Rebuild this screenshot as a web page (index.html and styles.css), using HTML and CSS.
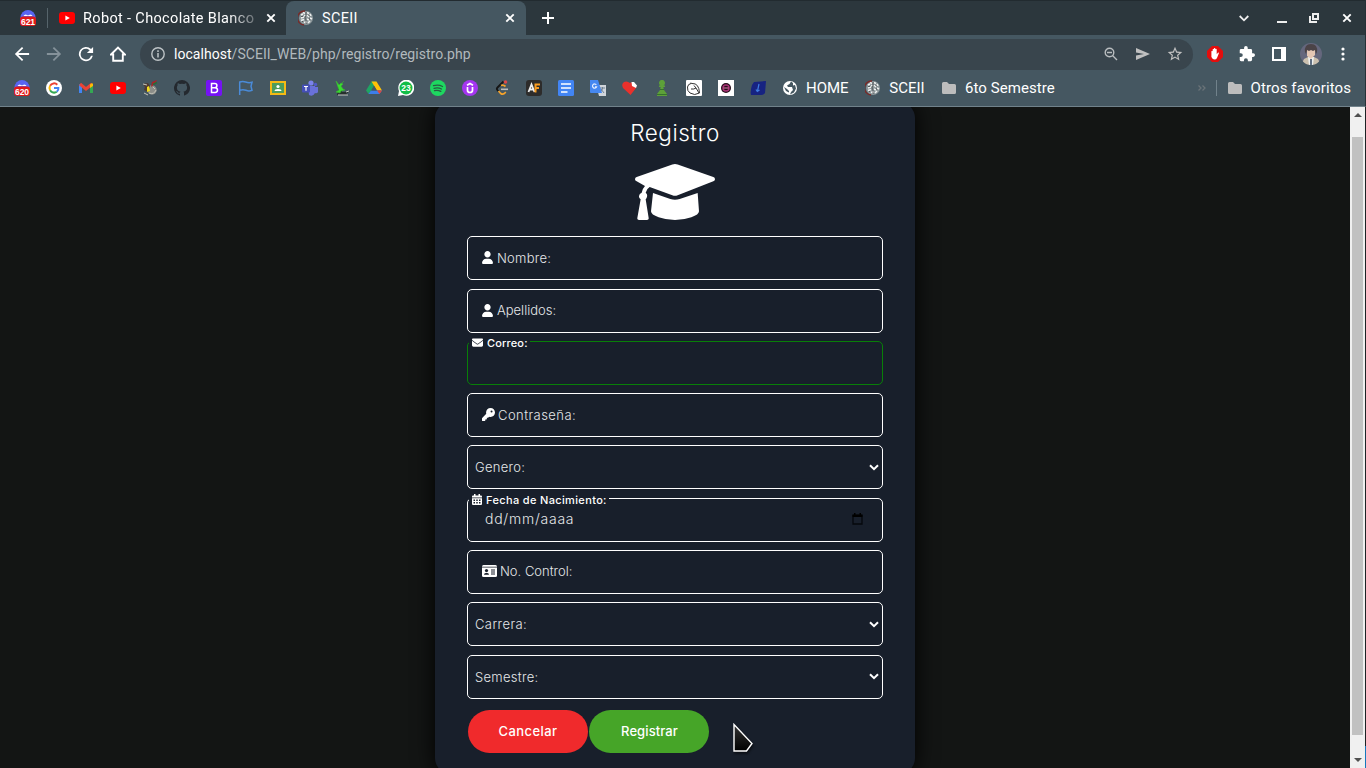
FILE: index.html
```html
<!DOCTYPE html>
<html lang="es">
<head>
<meta charset="utf-8">
<title>SCEII</title>
<link rel="stylesheet" href="styles.css">
</head>
<body>
<svg class="defs" width="0" height="0">
  <symbol id="counter" viewBox="0 0 16 16"><circle cx="8" cy="7.5" r="7.5" fill="#5865f2"/><path d="M3.500 6q.5-1.500 2.500-1.500l1 .7h2l1-.7q2 0 2.500 1.500z" fill="#fff"/><rect y="6.500" width="16" height="9.500" rx="3" fill="#e01919"/></symbol>
  <symbol id="yt" viewBox="0 0 16 16"><rect y="2" width="16" height="12" rx="3" fill="#f00"/><path d="M6.400 5.500v5L10.800 8z" fill="#fff"/></symbol>
  <symbol id="brain" viewBox="0 0 16 16"><circle cx="8" cy="8" r="7" fill="#8b9699"/><path d="M7 1A7 7 0 0 0 6 15" fill="none" stroke="#7c2926" stroke-width="1.300"/><path d="M3 5l2-1M5 2.500l2 1M3 8l3-1M3 10.500l3-1M6 5.500l2 .5M6 12l2 1M9 2.500l2 1M12 4l1 2M9 5l2 2M12 8l2 1M9 9l2 1M12 11l-2 2M8 11v2" fill="none" stroke="#eef0f0" stroke-width="1.500"/><path d="M8 2v3l-1 3 1 2v4M10 4.500l2 2M11 8l1 2M3 6.500l2 0M4 12l1-1" fill="none" stroke="#46494b" stroke-width=".8"/></symbol>
  <symbol id="close" viewBox="0 0 10 10"><path d="M1.300 1.300l7.400 7.400M8.700 1.300L1.300 8.700" stroke="currentColor" stroke-width="1.900"/></symbol>
  <symbol id="folder" viewBox="0 0 16 16"><path d="M1 3.500Q1 2 2.500 2H6l2 2h5.500q1.500 0 1.500 1.500v7q0 1.500-1.500 1.500h-11Q1 14 1 12.500z" fill="#bdbdbd"/></symbol>
  <symbol id="user" viewBox="0 0 448 512" preserveAspectRatio="none"><path fill="#fff" d="M224 256c70.700 0 128-57.300 128-128S294.700 0 224 0 96 57.300 96 128s57.300 128 128 128zM274.700 304H173.300C77.600 304 0 381.600 0 477.300 0 496.500 15.500 512 34.700 512h378.700c19.100 0 34.600-15.500 34.600-34.700C448 381.600 370.400 304 274.700 304z"/></symbol>
  <symbol id="chev" viewBox="0 0 10 7"><path d="M1 1.200l4 4 4-4" fill="none" stroke="#fff" stroke-width="2"/></symbol>
</svg>

<div class="browser">
  <div class="tabstrip">
    <svg class="i16 pinned"><use href="#counter"/><text class="badge" x="8" y="14.500">621</text></svg>
    <span class="tab-sep"></span>
    <svg class="i16"><use href="#yt"/></svg>
    <span class="tab-title faded">Robot - Chocolate Blanco</span>
    <svg class="i-close"><use href="#close"/></svg>
    <div class="tab-active">
      <svg class="i16"><use href="#brain"/></svg>
      <span class="tab-title">SCEII</span>
      <svg class="i-close"><use href="#close"/></svg>
    </div>
    <svg class="newtab" viewBox="0 0 12 12"><path d="M6 0v12M0 6h12" stroke="#fff" stroke-width="2"/></svg>
    <div class="window-buttons">
      <svg width="10" height="7" viewBox="0 0 10 7"><path d="M.7 1l4.300 4.300L9.300 1" fill="none" stroke="#eee" stroke-width="1.800"/></svg>
      <svg width="10" height="10" viewBox="0 0 10 10"><path d="M0 9h10" stroke="#eee" stroke-width="2"/></svg>
      <svg width="10" height="10" viewBox="0 0 10 10"><path d="M4 1h5v5H4zM1 3v6h7" fill="none" stroke="#eee" stroke-width="2"/></svg>
      <svg class="i-close win"><use href="#close"/></svg>
    </div>
  </div>

  <div class="toolbar">
    <svg class="i16" viewBox="3 3 18 18"><path fill="#fff" d="M20 11H7.830l5.590-5.590L12 4l-8 8 8 8 1.410-1.410L7.830 13H20z"/></svg>
    <svg class="i16" viewBox="3 3 18 18"><path fill="#85929a" d="M4 11h12.170l-5.590-5.590L12 4l8 8-8 8-1.410-1.410L16.170 13H4z"/></svg>
    <svg class="i16" viewBox="3 3 18 18"><path fill="#fff" d="M17.650 6.350A8 8 0 1 0 19.730 14h-2.080A6 6 0 1 1 12 6c1.660 0 3.140.69 4.220 1.780L13 11h7V4z"/></svg>
    <svg class="i16" viewBox="0 0 16 16"><path fill="none" stroke="#fff" stroke-width="1.900" d="M1 8.500L8 1.500l7 7h-2.200v6.300H3.200V8.500z"/></svg>
    <div class="omnibox">
      <svg class="i14" viewBox="0 0 14 14"><circle cx="7" cy="7" r="6.200" fill="none" stroke="#bdc3c6" stroke-width="1.400"/><path d="M7 6v4.500M7 3.300v1.600" stroke="#bdc3c6" stroke-width="1.500"/></svg>
      <span class="url"><b>localhost</b>/SCEII_WEB/php/registro/registro.php</span>
      <div class="omni-actions">
        <svg class="i16" viewBox="0 0 16 16"><path d="M9.500 9.500l4.500 4.500M4 6.500h5" stroke="#b9bdbf" stroke-width="1.400"/><circle cx="6.500" cy="6.500" r="4.300" fill="none" stroke="#b9bdbf" stroke-width="1.400"/></svg>
        <svg class="i16" viewBox="0 0 16 16"><path fill="#c0c0c0" d="M1 2l14 6-14 6V9.500L9 8 1 6.500z"/></svg>
        <svg class="i16" viewBox="1 1 22 22"><path fill="#c0c0c0" d="M22 9.240l-7.190-.62L12 2 9.190 8.630 2 9.240l5.460 4.730L5.820 21 12 17.270 18.180 21l-1.630-7.030zM12 15.400l-3.760 2.270 1-4.280-3.320-2.880 4.380-.38L12 6.100l1.710 4.040 4.380.38-3.320 2.880 1 4.280z"/></svg>
      </div>
    </div>
    <div class="extensions">
      <svg class="i16" viewBox="0 0 16 16"><path d="M5 0h6l5 5v6l-5 5H5l-5-5V5z" fill="#e40d0d"/><path d="M4.400 8V5.200q.8-.8 1.300 0V3.200q.7-.8 1.300 0V2.300q.7-.8 1.300 0v.9q.8-.8 1.400 0v5l1.400-1.800q1-.1.800.8L10 12q-.7 1.500-2.500 1.500T4.400 11z" fill="#fff"/></svg>
      <svg class="i16" viewBox="1 1 22 22"><path fill="#fff" d="M20.500 11H19V7a2 2 0 0 0-2-2h-4V3.500a2.500 2.500 0 0 0-5 0V5H4a2 2 0 0 0-2 2v3.800h1.500a2.700 2.700 0 0 1 0 5.400H2V20a2 2 0 0 0 2 2h3.800v-1.500a2.700 2.700 0 0 1 5.400 0V22H17a2 2 0 0 0 2-2v-4h1.500a2.500 2.500 0 0 0 0-5z"/></svg>
      <svg class="i16" viewBox="0 0 16 16"><path fill="#fff" fill-rule="evenodd" d="M1 1h14v14H1zM3 3v10h7V3z"/></svg>
      <svg class="avatar" viewBox="0 0 22 22"><defs><clipPath id="av"><circle cx="11" cy="11" r="11"/></clipPath></defs><g clip-path="url(#av)"><path fill="#65677d" d="M0 0h22v22H0z"/><path fill="#cbc0ae" d="M1 22l3-6 4-2h6l4 2 3 6z"/><path fill="#edf0ef" d="M8 14h6l-1 8H9z"/><path fill="#e3c6b4" d="M7 6h8v6l-4 4-4-3z"/><path fill="#4b4347" d="M5 9Q4 1 11 1t6 8l-1 2-1-4-2 1-2-1-2 1-2-1-1 4z"/><path d="M11 16v6" stroke="#30455e" stroke-width="1.500"/></g></svg>
      <svg class="menu" viewBox="0 0 4 14"><circle cx="2" cy="2" r="1.600" fill="#fff"/><circle cx="2" cy="7" r="1.600" fill="#fff"/><circle cx="2" cy="12" r="1.600" fill="#fff"/></svg>
    </div>
  </div>

  <div class="bookmarks">
    <svg class="i16"><use href="#counter"/><text class="badge" x="8" y="14.500">620</text></svg>
    <svg class="i16" viewBox="0 0 16 16"><circle cx="8" cy="8" r="8" fill="#fff"/><g fill="none" stroke-width="2"><path d="M4.100 5.800A4.500 4.500 0 0 1 11.300 4.700" stroke="#ea4335"/><path d="M4.100 5.800a4.500 4.500 0 0 0 0 4.400" stroke="#fbbc05"/><path d="M4.100 10.200a4.500 4.500 0 0 0 6.700 1.500" stroke="#34a853"/><path d="M10.800 11.700Q12.700 10 12.400 8H8" stroke="#4285f4"/></g></svg>
    <svg class="i16" viewBox="0 0 16 16"><path d="M1 4v9h3V6" fill="#4285f4"/><path d="M12 6v7h3V4" fill="#34a853"/><path d="M2 4l6 5 6-5" fill="none" stroke="#ea4335" stroke-width="3"/><path d="M12 4.500l2-1.500 1 1v2l-3 2z" fill="#fbbc04"/></svg>
    <svg class="i16"><use href="#yt"/></svg>
    <svg class="i16" viewBox="0 0 16 16"><circle cx="10" cy="10" r="4.700" fill="#8c8e89"/><path d="M7 13q5 2 7-3M11 7l2 2" stroke="#c2c2b8" fill="none"/><path d="M1 4l5-1 2 3-2 6-4-2 1-3z" fill="#503b31"/><path d="M10 2l5-2-2 4-4 3z" fill="#a82328"/><path d="M11 4.500l4-2" stroke="#247039" stroke-width="1.500"/><path d="M5 7l2-1 1 5-3 1z" fill="#f3dd1b"/><path d="M1 4l4 1M2 13l4 2" stroke="#c5c5bd"/></svg>
    <svg class="i16" viewBox="0 0 16 16"><path fill="#24292f" d="M8 0a8 8 0 0 0-2.500 15.600c.4.100.500-.2.500-.4v-1.500c-2.200.5-2.700-.9-2.700-.9-.4-.9-.9-1.200-.9-1.200-.7-.5.100-.5.100-.5.800.1 1.200.8 1.200.8.700 1.300 1.900.9 2.300.7.100-.5.300-.9.500-1.100-1.800-.2-3.600-.9-3.600-4 0-.9.300-1.600.8-2.200-.1-.2-.4-1 .1-2.100 0 0 .7-.2 2.200.8a7.700 7.700 0 0 1 4 0c1.500-1 2.200-.8 2.200-.8.400 1.100.2 1.900.1 2.100.5.600.8 1.300.8 2.200 0 3.100-1.900 3.800-3.700 4 .3.300.6.800.6 1.500v2.200c0 .2.100.5.500.4A8 8 0 0 0 8 0z"/></svg>
    <svg class="i16" viewBox="0 0 16 16"><rect width="16" height="16" rx="2" fill="#7512f5"/><path d="M5.500 3.500h3.300a2.100 2.100 0 0 1 0 4.200H5.500zM5.500 7.700h3.600a2.400 2.400 0 0 1 0 4.800H5.500z" fill="none" stroke="#fff" stroke-width="1.500"/></svg>
    <svg class="i16" viewBox="0 0 16 16"><path fill="none" stroke="#4a8bd8" stroke-width="1.500" d="M1.700 15V2q3-1.200 6 0t6.300.3l-1 4 1 4q-3 1.200-6 0t-6.300 0"/></svg>
    <svg class="i16" viewBox="0 0 16 16"><path fill="#f5ba14" d="M0 1h16v14H0z"/><path fill="#4d9d5b" d="M2 3h12v10H2z"/><circle cx="8" cy="6.500" r="1.600" fill="#fff"/><path d="M4.500 11q0-2 3.500-2t3.500 2z" fill="#fff"/></svg>
    <svg class="i16" viewBox="0 0 16 16"><circle cx="9" cy="3" r="2.600" fill="#7b83eb"/><circle cx="13.500" cy="4.500" r="1.700" fill="#5059c9"/><path d="M6 6h7v7q-2 4-6 2zM13 7h3v5q-1 2-3 1z" fill="#6971d9"/><rect y="4.500" width="8" height="8" rx="1" fill="#454fb8"/><path d="M2 6.500h4M4 6.500v4.300" stroke="#fff" stroke-width="1.200"/></svg>
    <svg class="i16" viewBox="0 0 16 16"><path d="M6 3l2 5 0 4 3 0 5-1-4 3 3 1H3z" fill="#26302c"/><path d="M2 1l3 4 2-2 2 1-2 2 2 3 2 1-4 1-1 2-4-1 3-2-1-3zM8 3l2-2" fill="#39dc31" stroke="#39b930" stroke-width=".6"/><path d="M4 15h10M12 12l3-1" stroke="#c6c9c6"/></svg>
    <svg class="i16" viewBox="0 0 16 16"><path d="M5.500 1.500h5L5 11l-2.500 3L0 10.500z" fill="#1fa463"/><path d="M5.500 1.500h5L16 10.500h-5z" fill="#ffc107"/><path d="M5 10.500h11L13.500 14h-11z" fill="#3d7eea"/><path d="M11 10.500h5L13.500 14z" fill="#e94335"/><path d="M8 5.800l2.800 4.700H5.200z" fill="#455761"/></svg>
    <svg class="i16" viewBox="0 0 16 16"><path d="M0 16l1-5A8 8 0 1 1 5 15z" fill="#fff"/><circle cx="8" cy="8" r="6.500" fill="#12bd47"/><text class="badge" x="8" y="10.900">23</text></svg>
    <svg class="i16" viewBox="0 0 16 16"><circle cx="8" cy="8" r="8" fill="#1ed760"/><path d="M3.500 5.700q5-1.500 9 .8M4 8.300q4-1.200 7.500.7M4.500 10.700q3.500-.8 6.300.7" fill="none" stroke="#285c42" stroke-width="1.300" stroke-linecap="round"/></svg>
    <svg class="i16" viewBox="0 0 16 16"><circle cx="8" cy="8" r="8" fill="#a435f0"/><path d="M5.500 7v3.200q0 2.300 2.500 2.300t2.500-2.300V7M5 5.200l3-1.700 3 1.700" fill="none" stroke="#fff" stroke-width="1.700"/></svg>
    <svg class="i16" viewBox="0 0 16 16"><path d="M9.500 1.500L3.500 7.500q-1.300 1.300 0 2.700l1 1" fill="none" stroke="#151515" stroke-width="1.800"/><path d="M4.500 11l2.300 2.500q1.700 1.300 3.500 0l1.500-1.500M7 5.500q2.300-1 4.500 1" fill="none" stroke="#f5a32b" stroke-width="1.700"/><path d="M7 9.300h7" stroke="#bbb" stroke-width="1.600"/><circle cx="11.500" cy="2" r="1.800" fill="#db4848"/></svg>
    <svg class="i16" viewBox="0 0 16 16"><rect width="16" height="16" rx="3" fill="#2d2c2b"/><path d="M2.500 12L5.500 4.500 8.500 12M3.500 9.500h4" stroke="#eee" stroke-width="1.800" fill="none"/><path d="M9.500 12.500v-8H14M9.500 8H13" stroke="#f99c20" stroke-width="2" fill="none"/></svg>
    <svg class="i16" viewBox="0 0 16 16"><rect width="16" height="16" rx="1.500" fill="#4285f4"/><path d="M3 4h10M3 8h10M3 12h6.500" stroke="#fff" stroke-width="1.700"/></svg>
    <svg class="i16" viewBox="0 0 16 16"><path d="M6 5h10v11H9z" fill="#d0d5db"/><path d="M10 8h5M12.500 7v2l-3 4M11 9l3 4" stroke="#718292" fill="none"/><path d="M0 0h8l4 13H1q-1 0-1-1z" fill="#4688f1"/><path d="M6.300 4.800A2.100 2.100 0 1 0 6.600 6.800H5" stroke="#e4edff" fill="none" stroke-width="1.200"/></svg>
    <svg class="i16" viewBox="0 0 16 16"><path d="M8.500 15L1 8q-2-4 1-6 3-1.500 6 1l1.500-1 1 4 4 1.500z" fill="#e9312c"/><path d="M9.500 2H12l3 3.500-1 2.500-4-2z" fill="#fff"/></svg>
    <svg class="i16" viewBox="0 0 16 16"><path d="M3 16v-2l3-4 .700-3H5V5.500h1.500a3 3 0 1 1 3 0H11V7H9.300l.7 3 3 4v2z" fill="#5da039"/><path d="M3 14.500h10M6 9.500h4" stroke="#35722b"/></svg>
    <svg class="i16" viewBox="0 0 16 16"><rect width="16" height="16" rx="1" fill="#fff"/><path d="M4.500 3L6 3.500Q13 3 13.500 13q-5 3-9.500 0-3-2-2.500-6Q2 4 5 3.500M5 9q3 .5 5-1l3 5M8 5.500L10 8" fill="none" stroke="#333" stroke-width="1"/></svg>
    <svg class="i16" viewBox="0 0 16 16"><path fill="#fff" d="M0 0h16v16H0z"/><circle cx="8" cy="8" r="5" fill="#250c18"/><circle cx="8" cy="8" r="3" fill="none" stroke="#a73174" stroke-width="1.500"/><path d="M5.500 8h5" stroke="#e882b2"/></svg>
    <svg class="i16" viewBox="0 0 16 16"><path d="M4 2l12-1-1 12q-1 2-4 2H1q-1-3 1-10z" fill="#172381"/><path d="M9 4l-1.500 7M6 9.500l1.300 2L9.500 10" stroke="#3f7ce3" stroke-width="1.200" fill="none"/></svg>
    <div class="mark-label"><svg class="i16" viewBox="0 0 16 16"><circle cx="8" cy="8" r="7" fill="#fff"/><path d="M9 1.500L7.500 4 5 5.500 6 7h4l1 3-2 2-1 2.500 4-2 2-4-1-3.500-2 .5V3zM2 7l3 2 2 2v1.500l-3-1.500z" fill="#455761"/></svg><span>HOME</span></div>
    <div class="mark-label sceii"><svg class="i16"><use href="#brain"/></svg><span>SCEII</span></div>
    <div class="mark-label six"><svg class="i16"><use href="#folder"/></svg><span>6to Semestre</span></div>
    <div class="other-marks">
      <svg width="8" height="6" viewBox="0 0 8 6"><path d="M.5.500L3 3 .5 5.500M4.500.5L7 3 4.500 5.500" stroke="#6a7378" stroke-width="1.300" fill="none"/></svg>
      <span class="mark-sep"></span>
      <svg class="i16"><use href="#folder"/></svg><span>Otros favoritos</span>
    </div>
  </div>
</div>

<div class="viewport">
  <main class="page">
    <form class="card">
      <h1>Registro</h1>
      <svg class="cap" viewBox="0 0 240 168"><g fill="#fff"><path d="M112 1.500q8-3 16 0L235 39q5 2 5 6.500t-5 6.500L128 94q-8 3-16 0L44 69q-8 4-12 17 6 4 4 12-1 5-4 8l9 56q1 6-5 6H12q-6 0-5-6l10-56q-6-4-5-10 1-7 8-10 3-13 10-20L5 52Q0 50 0 45.500T5 39z"/><path d="M54 87l52 18q14 5 28 0l54-18 4 55q0 10-23 18-22 8-49 8t-49-8q-23-8-23-18z"/></g></svg>
      <div class="fields">
        <div class="field pad"><svg class="ic user"><use href="#user"/></svg><span class="nombre">Nombre:</span></div>
        <div class="field pad"><svg class="ic user"><use href="#user"/></svg><span>Apellidos:</span></div>
        <div class="field valid"><div class="legend"><svg width="11" height="11" viewBox="0 0 512 512"><path fill="#fff" d="M48 64C21.500 64 0 85.500 0 112c0 15.100 7.100 29.300 19.200 38.400L236.800 313.600c11.400 8.500 27 8.500 38.400 0L492.800 150.400C504.900 141.300 512 127.100 512 112c0-26.500-21.500-48-48-48zM0 176v208c0 35.300 28.700 64 64 64h384c35.300 0 64-28.700 64-64V176L294.400 339.200c-22.800 17.100-54 17.100-76.800 0z"/></svg><span class="correo">Correo:</span></div></div>
        <div class="field pad"><svg class="ic key" viewBox="0 0 512 512"><path fill="#fff" fill-rule="evenodd" d="M336 352c97.200 0 176-78.800 176-176S433.200 0 336 0 160 78.800 160 176c0 18.700 2.900 36.800 8.300 53.700L7 391c-4.500 4.500-7 10.600-7 17v80c0 13.300 10.700 24 24 24h80c13.300 0 24-10.700 24-24v-40h40c13.300 0 24-10.700 24-24v-40h40c6.400 0 12.500-2.500 17-7l33.300-33.300c16.900 5.400 35 8.300 53.700 8.300zM376 96a40 40 0 1 1 0 80 40 40 0 1 1 0-80z"/></svg><span class="contra">Contraseña:</span></div>
        <div class="field select"><span class="genero">Genero:</span><svg class="chev"><use href="#chev"/></svg></div>
        <div class="field date"><div class="legend"><svg width="10" height="11" viewBox="0 0 20 22"><path fill="#fff" fill-rule="evenodd" d="M4 0h3v3h6V0h3v3h2q2 0 2 2v2H0V5q0-2 2-2h2zM0 8.500h20V20q0 2-2 2H2q-2 0-2-2zM3 11v3h3v-3zm5.500 0v3h3v-3zm5.500 0v3h3v-3zM3 16v3h3v-3zm5.500 0v3h3v-3zm5.500 0v3h3v-3z"/></svg><span class="fecha">Fecha de Nacimiento:</span></div><span class="fmt">dd/mm/aaaa</span><svg class="cal" viewBox="0 0 11 12"><path d="M1 2.500h9v8.500H1z" fill="none" stroke="#05080d" stroke-width="1.300"/><path d="M.5 1.500h10v2.500H.5zM2 0h1.500v2H2zM7.500 0H9v2H7.500z" fill="#000"/></svg></div>
        <div class="field pad"><svg class="ic id" viewBox="0 0 15 12"><path fill="#fff" d="M0 1.500Q0 0 1.500 0h12Q15 0 15 1.500v9q0 1.500-1.500 1.500h-12Q0 12 0 10.500z"/><path fill="#181f2b" d="M0 1.700h15v.8H0zM2 9.800q0-1.800 1.800-1.800h1.400Q7 8 7 9.800zM9 4.500h4v.9H9zM9 6.500h4v.9H9zM9 8.500h4v.9H9z"/><circle cx="4.500" cy="5.600" r="1.600" fill="#181f2b"/></svg><span>No. Control:</span></div>
        <div class="field select"><span class="carrera">Carrera:</span><svg class="chev"><use href="#chev"/></svg></div>
        <div class="field select"><span class="semestre">Semestre:</span><svg class="chev"><use href="#chev"/></svg></div>
      </div>
      <div class="buttons"><button type="button" class="btn cancel">Cancelar</button><button type="button" class="btn register">Registrar</button></div>
    </form>
  </main>
  <div class="scrollbar">
    <svg width="8" height="4" viewBox="0 0 8 4"><path d="M0 4l4-4 4 4z" fill="#505050"/></svg>
    <span class="thumb"></span>
    <svg width="8" height="4" viewBox="0 0 8 4"><path d="M0 0l4 4 4-4z" fill="#505050"/></svg>
  </div>
  <div class="edge"></div>
</div>
<svg class="cursor" viewBox="0 0 21 30"><defs><linearGradient id="cg" x2="0" y2="1"><stop stop-color="#333"/><stop offset="1" stop-color="#000"/></linearGradient></defs><path d="M1 1.500V28h12.500l5.500-7.500z" fill="url(#cg)" stroke="#fff" stroke-width="1.400"/></svg>
</body>
</html>
```
FILE: styles.css
```css
* { box-sizing: border-box; }
body { margin: 0; width: 1366px; height: 768px; overflow: hidden; display: flex; flex-direction: column; background: #131514; color: #fff; font-family: Roboto, sans-serif; }
svg { display: block; flex: none; }
.defs { position: absolute; }
.i16 { width: 16px; height: 16px; }
.i14 { width: 14px; height: 14px; }
.i-close { width: 10px; height: 10px; color: #fff; }
.badge { font: bold 8.500px "Liberation Sans", sans-serif; fill: #fff; text-anchor: middle; }
.browser { height: 107px; flex: none; background: #455761; border-bottom: 1px solid #71828b; border-right: 1px solid #263137; }
.tabstrip { height: 35px; display: flex; align-items: center; background: #2c373d; border-top: 1px solid #222b30; padding-left: 20px; }
.tab-sep { width: 1px; height: 20px; margin: 0 11px; background: #56646b; }
.tab-title { font-size: 14.500px; white-space: nowrap; letter-spacing: .3px; }
.faded { width: 171px; margin: 0 12px 0 8px; overflow: hidden; letter-spacing: .35px; -webkit-mask-image: linear-gradient(90deg, #000 85%, rgba(0,0,0,.3)); mask-image: linear-gradient(90deg, #000 85%, rgba(0,0,0,.3)); }
.tab-active { width: 240px; height: 34px; margin-left: 10px; padding: 0 11px 0 12px; display: flex; align-items: center; background: #455761; border-radius: 8px 8px 0 0; }
.tab-active .tab-title { margin: 0 auto 0 8px; }
.newtab { width: 12px; height: 12px; margin-left: 16px; }
.window-buttons { display: flex; gap: 28px; align-items: center; margin-left: auto; padding-right: 13px; }
.window-buttons svg:nth-child(3) { margin-left: -6px; }
.window-buttons svg:nth-child(4) { margin-left: -5px; }
.toolbar { height: 38px; display: flex; align-items: center; gap: 16px; padding-left: 14px; }
.omnibox { width: 1053px; height: 31px; margin-left: -2px; border-radius: 16px; background: #39454d; display: flex; align-items: center; padding: 0 10px 0 11px; }
.url { margin-left: 9px; font-size: 14px; color: #b1b9bd; letter-spacing: .04px; }
.url b { font-weight: 400; color: #fff; }
.omni-actions { margin-left: auto; display: flex; gap: 16px; }
.extensions { display: flex; gap: 16px; align-items: center; margin-left: -2px; }
.avatar { width: 22px; height: 22px; margin: 0 -3px; }
.menu { width: 4px; height: 14px; margin-left: 6px; }
.bookmarks { height: 32px; display: flex; align-items: center; gap: 16px; padding: 0 14px 2px 14px; font-size: 15px; white-space: nowrap; }
.mark-label, .other-marks { display: flex; align-items: center; gap: 8px; }
.sceii { margin-left: .6px; }
.six { margin-left: .3px; letter-spacing: .08px; }
.other-marks { margin-left: auto; letter-spacing: .1px; }
.mark-sep { width: 1px; height: 16px; background: #71828b; margin: 0 2px; }
.viewport { flex: 1; display: flex; min-height: 0; }
.page { width: 1350px; overflow: hidden; display: flex; justify-content: center; align-items: flex-start; background: #131514; }
.card { width: 480px; height: 672px; flex: none; margin-top: -5px; padding: 16px 32px 0; border-radius: 16px; background: #181f2b; box-shadow: 0 0 22px #000; font-family: Inter, sans-serif; font-weight: 300; }
h1 { margin: 0; height: 30px; line-height: 30px; text-align: center; font-size: 22.500px; font-weight: 300; letter-spacing: .55px; }
.cap { width: 80px; height: 56px; margin: 16px auto 16.300px; }
.fields { display: grid; gap: 8.282px; }
.field { height: 44px; border: 1px solid #fff; border-radius: 5px; display: flex; align-items: center; position: relative; font-size: 13px; color: #e5e7e9; }
.field > span { white-space: nowrap; line-height: 18px; }
.pad { padding: 0 0 1px 14px; }
.select { padding: 0 3px 0 7px; justify-content: space-between; }
.valid { border-color: #087f08; }
.date { padding: 0 19px 1px 17px; justify-content: space-between; }
.nombre { letter-spacing: .25px; }
.contra { letter-spacing: .45px; }
.genero { letter-spacing: .3px; }
.carrera { letter-spacing: .4px; }
.semestre { letter-spacing: .3px; }
.fmt { font-size: 14px; letter-spacing: .75px; }
.correo { letter-spacing: .15px; }
.fecha { letter-spacing: .35px; }
.ic { height: 13px; margin-right: 4px; }
.user { width: 11px; }
.key { width: 13px; margin-right: 3px; }
.id { width: 15px; height: 12px; margin-right: 3px; }
.chev { width: 10px; height: 7px; }
.cal { width: 11px; height: 12px; }
.legend { position: absolute; top: -7px; left: 1px; height: 16px; padding: 0 2px 0 3px; display: flex; align-items: center; gap: 4px; background: #181f2b; font-size: 11px; font-weight: 500; color: #fff; white-space: nowrap; }
.buttons { display: flex; gap: 1px; padding-left: 1px; margin-top: 11.400px; }
.btn { width: 120px; height: 43px; padding: 0; border: 0; border-radius: 22px; color: #fff; font: 500 13px Inter, sans-serif; letter-spacing: .1px; }
.cancel { background: #f02a2c; letter-spacing: .4px; }
.register { background: #46a528; padding-left: 1px; }
.scrollbar { width: 15px; flex: none; background: #f0f0f0; display: flex; flex-direction: column; align-items: center; padding: 6px 0; }
.thumb { width: 11px; height: 598px; margin: 20px 0 auto; background: #c1c1c1; }
.edge { width: 1px; background: linear-gradient(#1d2224 639px, #1678bd 639px); }
.cursor { position: absolute; left: 733px; top: 723px; width: 21px; height: 30px; filter: drop-shadow(1px 2px 1px rgba(0,0,0,.5)); }
```
